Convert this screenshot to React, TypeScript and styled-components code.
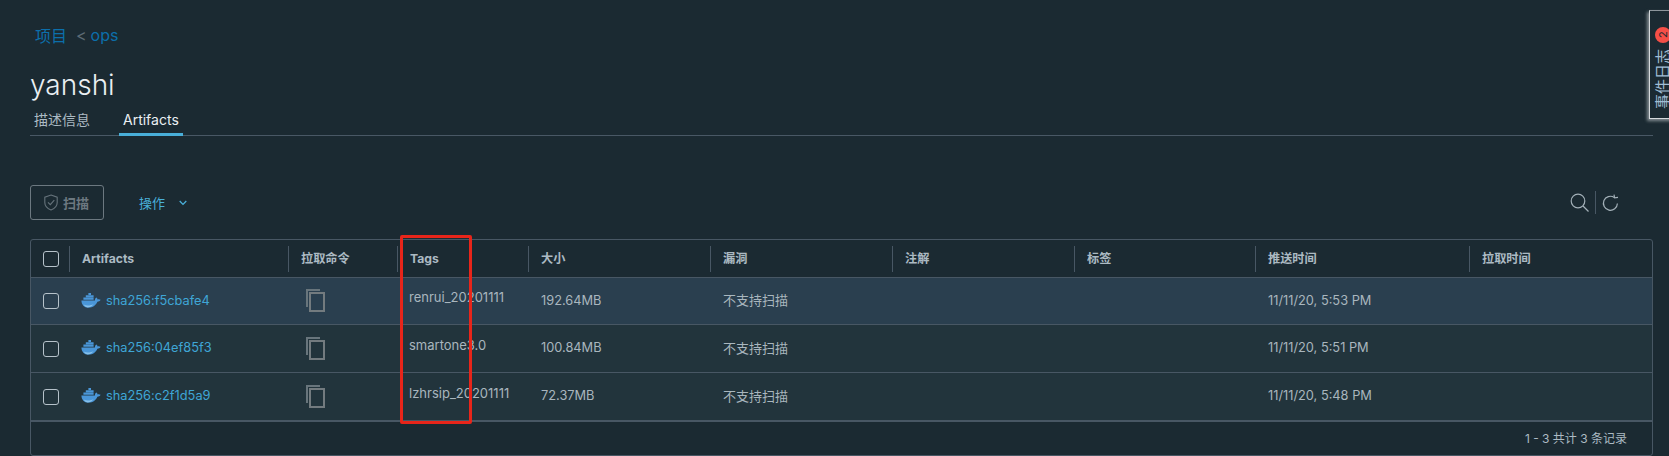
import styled, { createGlobalStyle } from "styled-components";

const FONT = `Inter, "Noto Sans CJK SC", sans-serif`;

const COLUMNS = [
  { title: "Artifacts", width: 219 },
  { title: "拉取命令", width: 109 },
  { title: "Tags", width: 131 },
  { title: "大小", width: 182 },
  { title: "漏洞", width: 182 },
  { title: "注解", width: 182 },
  { title: "标签", width: 181 },
  { title: "推送时间", width: 214 },
  { title: "拉取时间", width: 182 },
];

const ROWS = [
  { digest: "sha256:f5cbafe4", tag: "renrui_20201111", size: "192.64MB", time: "11/11/20, 5:53 PM" },
  { digest: "sha256:04ef85f3", tag: "smartone3.0", size: "100.84MB", time: "11/11/20, 5:51 PM" },
  { digest: "sha256:c2f1d5a9", tag: "lzhrsip_20201111", size: "72.37MB", time: "11/11/20, 5:48 PM" },
];

const DockerIcon = () => (
  <DockerSvg width="20" height="15" viewBox="0 0 20 15">
    <path
      d="M0.4 7.4 H14 C13.9 6 14.5 5 15.4 4.6 C16 5 16.5 5.6 16.6 6.4 C17.5 6 18.6 6.1 19.6 6.8 C18.9 8.2 17.6 8.7 16.4 8.7 C15 12 12 14.6 7.4 14.6 C3 14.6 0.6 11.6 0.4 7.4 Z"
      fill="#4a96d8"
    />
    <path d="M2.6 11.6 C6 13.2 10 12.6 12.6 11 C10.6 13.6 8.6 14.4 6.6 14.4 C4.8 14.4 3.4 13.2 2.6 11.6 Z" fill="#86c0ea" />
    <path d="M2.4 4.6 H12.6 V6.8 H2.4 Z M4.8 2.2 H12.6 V4.2 H4.8 Z M7.4 0 H10 V1.9 H7.4 Z" fill="#4a96d8" />
  </DockerSvg>
);

const App = () => {
  return (
    <>
      <GlobalStyle />
      <Page>
        <Breadcrumb>
          <CrumbLink>项目</CrumbLink>
          <CrumbArrow>&lt;</CrumbArrow>
          <CrumbLink>ops</CrumbLink>
        </Breadcrumb>
        <Title>yanshi</Title>
        <Tabs>
          <Tab>描述信息</Tab>
          <Tab $active>Artifacts</Tab>
        </Tabs>
        <Toolbar>
          <ToolbarLeft>
            <ScanButton>
              <svg width="14" height="17" viewBox="0 0 14 17" fill="none" stroke="#66737b" strokeWidth="1.1">
                <path d="M7 1 L13.2 3.2 V8.5 C13.2 12 10.4 14.6 7 16 C3.6 14.6 0.8 12 0.8 8.5 V3.2 Z" />
                <path d="M4 8.4 L6.3 10.7 L10.3 6.2" />
              </svg>
              扫描
            </ScanButton>
            <ActionMenu>
              操作
              <svg width="8" height="6" viewBox="0 0 8 6" fill="none" stroke="#49afd9" strokeWidth="1.3">
                <path d="M0.7 1 L4 4.4 L7.3 1" />
              </svg>
            </ActionMenu>
          </ToolbarLeft>
          <ToolbarRight>
            <svg width="20" height="20" viewBox="0 0 20 20" fill="none" stroke="#a3b0b8" strokeWidth="1.2">
              <circle cx="8" cy="8" r="6.8" />
              <path d="M13 13 L18.5 18.5" />
            </svg>
            <ToolbarDivider />
            <svg width="17" height="18" viewBox="0 0 17 18" fill="none" stroke="#a3b0b8" strokeWidth="1.2">
              <path d="M12.2 3.4 A7 7 0 1 0 15.4 9.5" />
              <path d="M12 0.6 L12.6 3.8 L16 3.4" />
            </svg>
          </ToolbarRight>
        </Toolbar>
        <Grid>
          <HeadRow>
            <CheckCell>
              <Checkbox />
            </CheckCell>
            {COLUMNS.map((col) => (
              <HeadCell key={col.title} $width={col.width}>
                <HeadLabel>{col.title}</HeadLabel>
              </HeadCell>
            ))}
          </HeadRow>
          {ROWS.map((row, i) => (
            <Row key={row.digest} $selected={i === 0} $last={i === ROWS.length - 1}>
              <CheckCell>
                <Checkbox />
              </CheckCell>
              <Cell $width={COLUMNS[0].width}>
                <DockerIcon />
                <DigestLink>{row.digest}</DigestLink>
              </Cell>
              <Cell $width={COLUMNS[1].width}>
                <CopyIcon width="20" height="24" viewBox="0 0 20 24" fill="none">
                  <path d="M2 19 V2 H15" stroke="#68757c" strokeWidth="2" />
                  <rect x="5" y="5" width="14" height="18" stroke="#737b7f" strokeWidth="2" />
                </CopyIcon>
              </Cell>
              <Cell $width={COLUMNS[2].width}>
                <TagText>{row.tag}</TagText>
              </Cell>
              <Cell $width={COLUMNS[3].width}>{row.size}</Cell>
              <Cell $width={COLUMNS[4].width}>
                <VulnText>不支持扫描</VulnText>
              </Cell>
              <Cell $width={COLUMNS[5].width} />
              <Cell $width={COLUMNS[6].width} />
              <Cell $width={COLUMNS[7].width}>{row.time}</Cell>
              <Cell $width={COLUMNS[8].width} />
            </Row>
          ))}
          <GridFooter>1 - 3 共计 3 条记录</GridFooter>
          <Highlight />
        </Grid>
        <EventTab>
          <EventLabel>
            事件日志
            <EventBadge>2</EventBadge>
          </EventLabel>
        </EventTab>
      </Page>
    </>
  );
};

export default App;

// ----style----
const GlobalStyle = createGlobalStyle`
  html, body {
    margin: 0;
    padding: 0;
    background-color: #1b2a32;
  }
  * {
    box-sizing: border-box;
  }
`;

const Page = styled.div`
  position: relative;
  width: 1669px;
  height: 456px;
  padding: 24px 16px 0 30px;
  overflow: hidden;
  font-family: ${FONT};
  color: #acbac3;
  background-color: #1b2a32;
`;

const Breadcrumb = styled.div`
  display: flex;
  align-items: center;
  gap: 4px;
  height: 22px;
  padding-left: 5px;
  font-size: 16px;
`;

const CrumbLink = styled.span`
  color: #0c6fab;
`;

const CrumbArrow = styled.span`
  margin-left: 5px;
  color: #5d6b74;
`;

const Title = styled.h1`
  margin: 18px 0 0 0;
  height: 44px;
  font-size: 28px;
  line-height: 42px;
  font-weight: 300;
  color: #eaeff2;
`;

const Tabs = styled.div`
  display: flex;
  gap: 25px;
  height: 28px;
  border-bottom: 1px solid #495865;
`;

const Tab = styled.div<{ $active?: boolean }>`
  height: 28px;
  padding: 0 4px;
  font-size: 14px;
  line-height: 24px;
  text-align: center;
  min-width: 63px;
  color: ${(p) => (p.$active ? "#eaeff2" : "#acbac3")};
  border-bottom: 3px solid ${(p) => (p.$active ? "#49afd9" : "transparent")};
`;

const Toolbar = styled.div`
  display: flex;
  align-items: center;
  justify-content: space-between;
  height: 35px;
  margin-top: 49px;
  padding-right: 34px;
`;

const ToolbarLeft = styled.div`
  display: flex;
  align-items: center;
`;

const ToolbarRight = styled.div`
  display: flex;
  align-items: center;
  gap: 6px;
`;

const ToolbarDivider = styled.span`
  width: 1px;
  height: 23px;
  margin-left: -1px;
  background-color: #485764;
`;

const ScanButton = styled.div`
  display: flex;
  align-items: center;
  gap: 5px;
  width: 74px;
  height: 35px;
  padding-left: 13px;
  font-size: 13px;
  font-weight: 600;
  color: #6c7880;
  border: 1px solid #6c7880;
  border-radius: 3px;
`;

const ActionMenu = styled.div`
  display: flex;
  align-items: center;
  gap: 14px;
  margin-left: 35px;
  font-size: 13px;
  color: #49afd9;
`;

const Grid = styled.div`
  position: relative;
  width: 1623px;
  height: 217px;
  margin-top: 19px;
  border: 1px solid #485764;
  border-radius: 3px;
`;

const HeadRow = styled.div`
  display: flex;
  height: 38px;
  border-bottom: 1px solid #485764;
`;

const Row = styled.div<{ $selected?: boolean; $last?: boolean }>`
  display: flex;
  height: ${(p) => (p.$last ? "49px" : p.$selected ? "47px" : "48px")};
  color: #a9b6be;
  background-color: ${(p) => (p.$selected ? "#2a3f4f" : "#22343c")};
  border-bottom: ${(p) => (p.$last ? "2px" : "1px")} solid #485764;
`;

const CheckCell = styled.div`
  display: flex;
  align-items: center;
  flex: none;
  width: 38px;
  padding-left: 12px;
`;

const Checkbox = styled.span`
  display: block;
  width: 16px;
  height: 16px;
  border: 1px solid #b6c2ca;
  border-radius: 3px;
`;

const HeadCell = styled.div<{ $width: number }>`
  display: flex;
  align-items: center;
  flex: none;
  width: ${(p) => p.$width}px;
`;

const HeadLabel = styled.span`
  display: block;
  flex: 1;
  height: 26px;
  padding-left: 12px;
  font-size: 12.2px;
  line-height: 26px;
  font-weight: 700;
  color: #acbac3;
  border-left: 1px solid #485764;
`;

const Cell = styled.div<{ $width: number }>`
  display: flex;
  align-items: center;
  flex: none;
  gap: 5px;
  width: ${(p) => p.$width}px;
  padding: 0 0 2px 13px;
  font-size: 12.8px;
`;

const DockerSvg = styled.svg`
  flex: none;
  margin-left: -1px;
`;

const DigestLink = styled.span`
  color: #3fa6d6;
`;

const CopyIcon = styled.svg`
  margin-left: 4px;
`;

const TagText = styled.span`
  margin-left: -1px;
  margin-top: -6px;
  font-size: 13px;
`;

const VulnText = styled.span`
  margin-top: -1px;
  font-size: 13px;
`;

const GridFooter = styled.div`
  height: 33px;
  padding-right: 25px;
  font-size: 12px;
  line-height: 33px;
  text-align: right;
  color: #acbac3;
`;

const Highlight = styled.div`
  position: absolute;
  left: 369px;
  top: -5px;
  width: 72px;
  height: 189px;
  border: 3px solid #e8251a;
  border-radius: 2px;
`;

const EventTab = styled.div`
  position: absolute;
  top: 10px;
  left: 1649px;
  width: 40px;
  height: 109px;
  background-color: #1b2a32;
  border-left: 1px solid #d5d9dc;
  border-top: 1px solid #8d969c;
  border-bottom: 1px solid #d5d9dc;
  box-shadow: -2px 2px 3px rgba(200, 205, 208, 0.6);
`;

const EventLabel = styled.div`
  position: absolute;
  left: 5px;
  bottom: 9px;
  display: flex;
  align-items: center;
  gap: 6px;
  font-size: 15px;
  line-height: 16px;
  color: #a0bdd4;
  writing-mode: vertical-rl;
  text-orientation: sideways;
  transform: rotate(180deg);
`;

const EventBadge = styled.span`
  display: flex;
  align-items: center;
  justify-content: center;
  width: 16px;
  height: 16px;
  font-size: 11px;
  color: #1b2a32;
  background-color: #f54f47;
  border-radius: 50%;
`;
